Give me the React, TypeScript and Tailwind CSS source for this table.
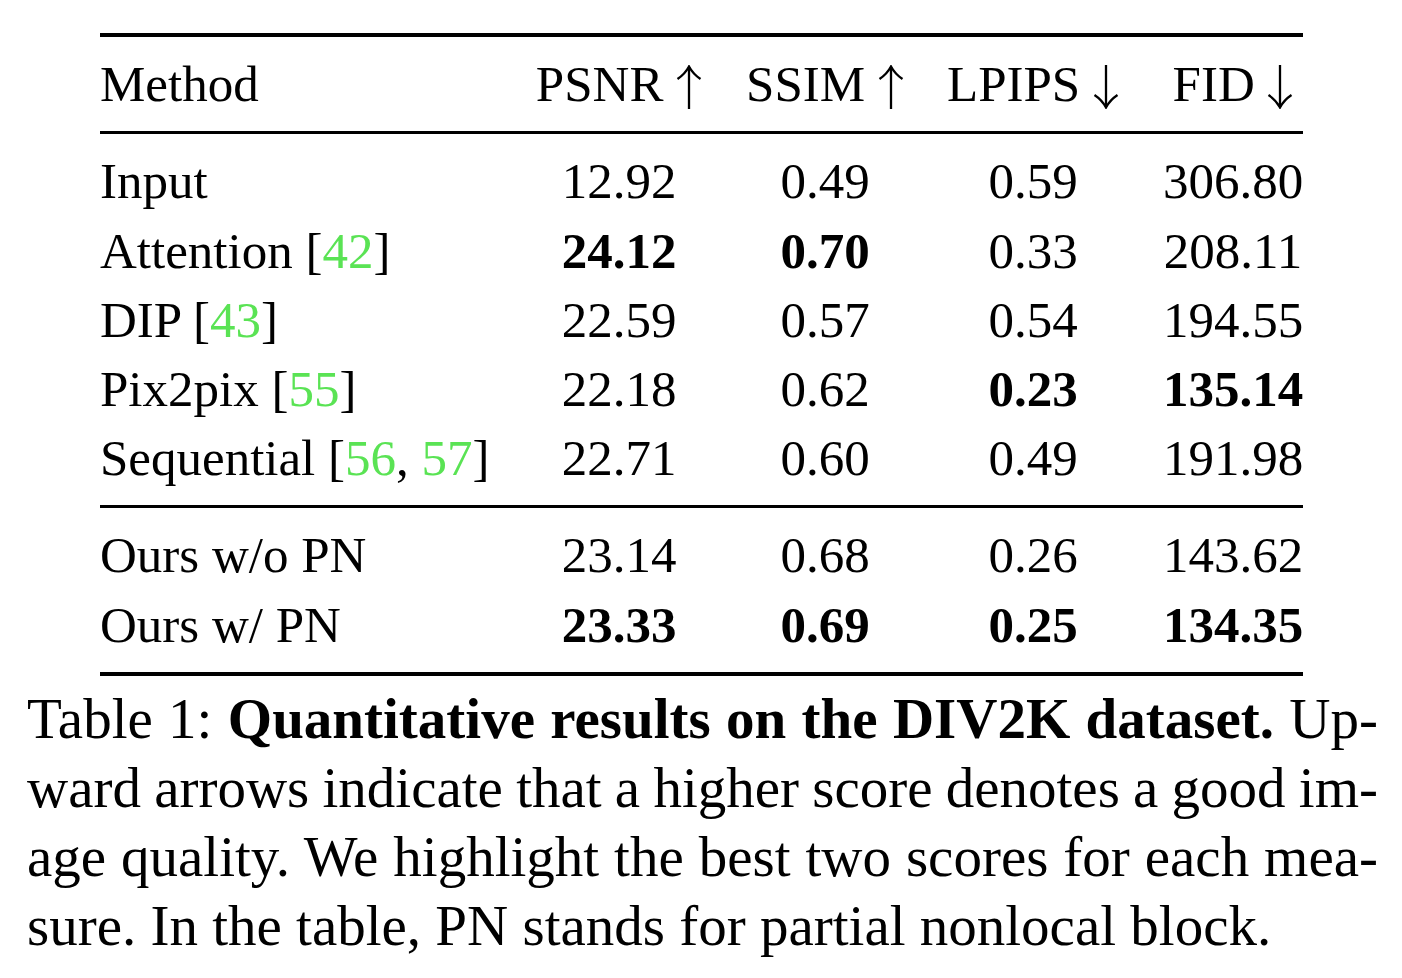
import React from "react";

type Cell = { text: string; bold?: boolean };
type Row = { name: React.ReactNode; cells: Cell[] };

function Arrow({ up }: { up?: boolean }) {
  // thin TeX-style arrow
  return (
    <svg
      width="26"
      height="44"
      viewBox="0 0 26 44"
      className="inline-block align-[-8px]"
      fill="none"
      stroke="black"
      strokeWidth="2.3"
    >
      {up ? (
        <>
          <path d="M13 2 L13 44" />
          <path d="M1.5 14 Q9 9 13 1.5 Q17 9 24.5 14" />
        </>
      ) : (
        <>
          <path d="M13 0 L13 42" />
          <path d="M1.5 30 Q9 35 13 42.5 Q17 35 24.5 30" />
        </>
      )}
    </svg>
  );
}

function Cite({ n }: { n: string }) {
  return <span className="text-[#5ae354]">{n}</span>;
}

const rows: Row[] = [
  {
    name: "Input",
    cells: [{ text: "12.92" }, { text: "0.49" }, { text: "0.59" }, { text: "306.80" }],
  },
  {
    name: (
      <>
        Attention [<Cite n="42" />]
      </>
    ),
    cells: [
      { text: "24.12", bold: true },
      { text: "0.70", bold: true },
      { text: "0.33" },
      { text: "208.11" },
    ],
  },
  {
    name: (
      <>
        DIP [<Cite n="43" />]
      </>
    ),
    cells: [{ text: "22.59" }, { text: "0.57" }, { text: "0.54" }, { text: "194.55" }],
  },
  {
    name: (
      <>
        Pix2pix [<Cite n="55" />]
      </>
    ),
    cells: [
      { text: "22.18" },
      { text: "0.62" },
      { text: "0.23", bold: true },
      { text: "135.14", bold: true },
    ],
  },
  {
    name: (
      <>
        Sequential [<Cite n="56" />, <Cite n="57" />]
      </>
    ),
    cells: [{ text: "22.71" }, { text: "0.60" }, { text: "0.49" }, { text: "191.98" }],
  },
];

const ours: Row[] = [
  {
    name: "Ours w/o PN",
    cells: [{ text: "23.14" }, { text: "0.68" }, { text: "0.26" }, { text: "143.62" }],
  },
  {
    name: "Ours w/ PN",
    cells: [
      { text: "23.33", bold: true },
      { text: "0.69", bold: true },
      { text: "0.25", bold: true },
      { text: "134.35", bold: true },
    ],
  },
];

const gridCols = "grid w-[1231px] grid-cols-[419px_200px_212px_204px_196px]";

function DataRow({ row }: { row: Row }) {
  return (
    <div className={gridCols}>
      <div className="whitespace-nowrap">{row.name}</div>
      {row.cells.map((c, i) => (
        <div key={i} className={"text-center " + (c.bold ? "font-bold" : "")}>
          {c.text}
        </div>
      ))}
    </div>
  );
}

const justLine =
  "text-justify [text-align-last:justify] whitespace-nowrap [word-spacing:-4px]";

export default function App() {
  return (
    <div className="min-h-screen bg-white text-black font-['Liberation_Serif','Times_New_Roman',serif]">
      <div className="pt-[33px] pl-[100px]">
        <div className="w-[1203px] text-[51px] leading-[69.3px]">
          <div className="h-[4px] bg-black" />
          <div className={gridCols + " py-[12.5px]"}>
            <div>Method</div>
            <div className="text-center whitespace-nowrap">
              PSNR <Arrow up />
            </div>
            <div className="text-center whitespace-nowrap">
              SSIM <Arrow up />
            </div>
            <div className="text-center whitespace-nowrap">
              LPIPS <Arrow />
            </div>
            <div className="text-center whitespace-nowrap">
              FID <Arrow />
            </div>
          </div>
          <div className="h-[2.5px] bg-black" />
          <div className="pt-[13.5px] pb-[11.5px]">
            {rows.map((r, i) => (
              <DataRow key={i} row={r} />
            ))}
          </div>
          <div className="h-[2.5px] bg-black" />
          <div className="pt-[13.5px] pb-[12.5px]">
            {ours.map((r, i) => (
              <DataRow key={i} row={r} />
            ))}
          </div>
          <div className="h-[4px] bg-black" />
        </div>
      </div>
      <div className="pl-[27px] pt-[7.5px]">
        <div className="w-[1351px] text-[57px] leading-[69px]">
          <div className={justLine}>
            Table 1: <b>Quantitative results on the DIV2K dataset.</b> Up-
          </div>
          <div className={justLine}>
            ward arrows indicate that a higher score denotes a good im-
          </div>
          <div className={justLine}>
            age quality. We highlight the best two scores for each mea-
          </div>
          <div className="whitespace-nowrap">
            sure. In the table, PN stands for partial nonlocal block.
          </div>
        </div>
      </div>
    </div>
  );
}
